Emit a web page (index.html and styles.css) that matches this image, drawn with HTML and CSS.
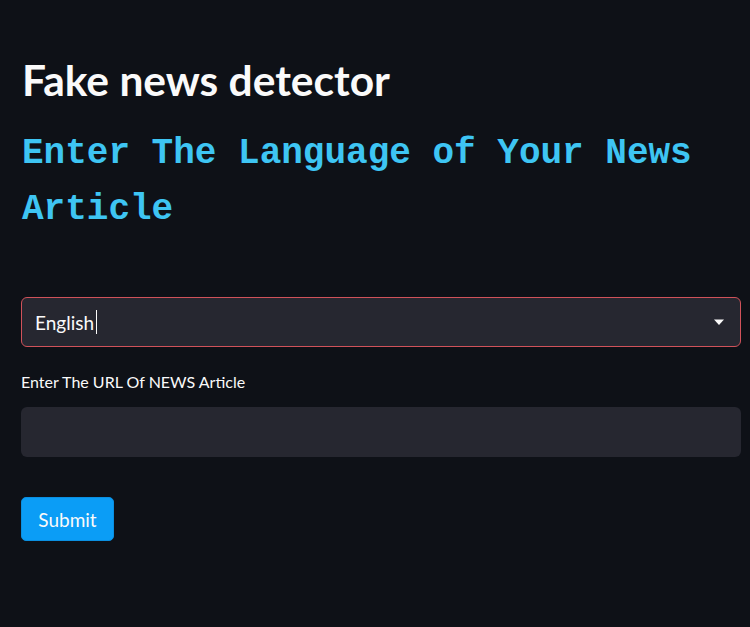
FILE: index.html
```html
<!DOCTYPE html>
<html>
<head>
<meta charset="utf-8">
<link rel="stylesheet" href="styles.css">
</head>
<body>
<main class="app">
  <h1 class="title">Fake news detector</h1>
  <h2 class="lang-heading">Enter The Language of Your News Article</h2>
  <div class="select">
    <span class="select-value">English<span class="caret"></span></span>
    <svg class="select-arrow" width="12" height="8" viewBox="0 0 12 8"><path d="M1 1.5 L11 1.5 L6 7 Z" fill="#fafafa"/></svg>
  </div>
  <label class="field-label">Enter The URL Of NEWS Article</label>
  <div class="text-input"></div>
  <button class="submit">Submit</button>
</main>
</body>
</html>
```
FILE: styles.css
```css
html, body {
  margin: 0;
  padding: 0;
  background: #0e1117;
}
body {
  width: 750px;
  height: 627px;
  overflow: hidden;
  font-family: "Lato", "Noto Sans", sans-serif;
  color: #fafafa;
}
.app {
  padding: 56px 9px 0 21px;
  display: flex;
  flex-direction: column;
  align-items: flex-start;
}
.title {
  margin: 0 0 0 1px;
  font-size: 42.5px;
  font-weight: 700;
  line-height: 48px;
  letter-spacing: 0;
}
.lang-heading {
  margin: 22px 0 0 1px;
  font-family: "Liberation Mono", monospace;
  font-weight: 700;
  font-size: 36px;
  line-height: 56px;
  color: #3ec5f3;
  width: 720px;
}
.select {
  margin-top: 59px;
  box-sizing: border-box;
  width: 720px;
  height: 50px;
  background: #262730;
  border: 1px solid #d0525a;
  border-radius: 6px;
  display: flex;
  align-items: center;
  justify-content: space-between;
  padding: 0 15px 0 13px;
}
.select-value {
  font-size: 19px;
  display: flex;
  align-items: center;
}
.caret {
  display: inline-block;
  width: 1px;
  height: 24px;
  background: #fafafa;
  margin-left: 2px;
}
.field-label {
  margin-top: 25px;
  font-size: 16px;
  line-height: 20px;
}
.text-input {
  margin-top: 15px;
  width: 720px;
  height: 50px;
  background: #262730;
  border-radius: 6px;
}
.submit {
  margin-top: 40px;
  background: #0b9df6;
  color: #fafafa;
  border: 1px solid #0a8fe0;
  border-radius: 5px;
  font-family: "Lato", "Noto Sans", sans-serif;
  font-size: 19px;
  height: 44px;
  width: 93px;
  padding: 0;
}
```
